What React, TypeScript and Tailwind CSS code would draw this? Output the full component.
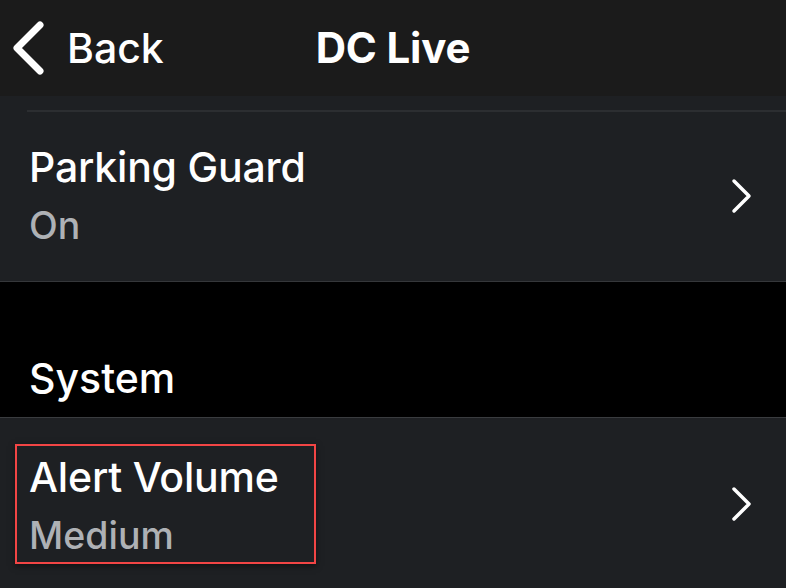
import React from 'react';

const ChevronLeft = () => (
  <svg width="34" height="54" viewBox="0 0 34 54" className="block">
    <polyline
      points="29,4 6,27 29,50"
      fill="none"
      stroke="white"
      strokeWidth="7"
      strokeLinecap="round"
      strokeLinejoin="round"
    />
  </svg>
);

const ChevronRight = () => (
  <svg width="24" height="38" viewBox="0 0 24 38" className="block">
    <polyline
      points="4,4 19,19 4,34"
      fill="none"
      stroke="white"
      strokeWidth="3.5"
      strokeLinecap="round"
      strokeLinejoin="round"
    />
  </svg>
);

type RowProps = {
  title: string;
  value: string;
  highlighted?: boolean;
};

const SettingRow = ({ title, value, highlighted }: RowProps) => (
  <div className="flex items-center justify-between h-[171px] pl-[29px] pr-[32px]">
    <div
      className={
        highlighted
          ? '-ml-[14px] pl-[12px] pr-[35px] pt-[8px] pb-[4px] border-2 border-[#f24545] shadow-[0_2px_6px_rgba(0,0,0,0.5)]'
          : ''
      }
    >
      <p className="text-[41px] leading-[46px] font-medium text-white tracking-[-0.2px]">{title}</p>
      <p className="mt-[14px] text-[37.5px] leading-[44px] font-medium text-[#aeb1b5]">{value}</p>
    </div>
    <ChevronRight />
  </div>
);

export default function App() {
  return (
    <div
      className="w-[786px] h-[588px] overflow-hidden bg-black"
      style={{ fontFamily: 'Inter, "Noto Sans", sans-serif' }}
    >
      {/* nav bar */}
      <header className="grid grid-cols-[1fr_auto_1fr] items-center h-[96px] bg-[#1b1b1b] text-white">
        <div className="flex items-center gap-[22px] pl-[11px]">
          <ChevronLeft />
          <span className="text-[41px] leading-none font-medium">Back</span>
        </div>
        <h1 className="text-[42px] leading-none font-bold tracking-[-0.2px]">DC Live</h1>
        <div />
      </header>

      <section className="bg-[#1e2023] border-b border-[#35373a] pt-[14px]">
        <div className="ml-[27px] h-[2px] bg-[#2c2e31]" />
        <div className="-mt-[2px]">
          <SettingRow title="Parking Guard" value="On" />
        </div>
      </section>

      <div className="h-[135px] flex items-end pl-[29px] pb-[16px]">
        <h2 className="text-[41px] leading-[46px] font-medium text-white">System</h2>
      </div>

      <section className="bg-[#1e2023] border-t border-[#3a3c3f]">
        <SettingRow title="Alert Volume" value="Medium" highlighted />
      </section>
    </div>
  );
}
